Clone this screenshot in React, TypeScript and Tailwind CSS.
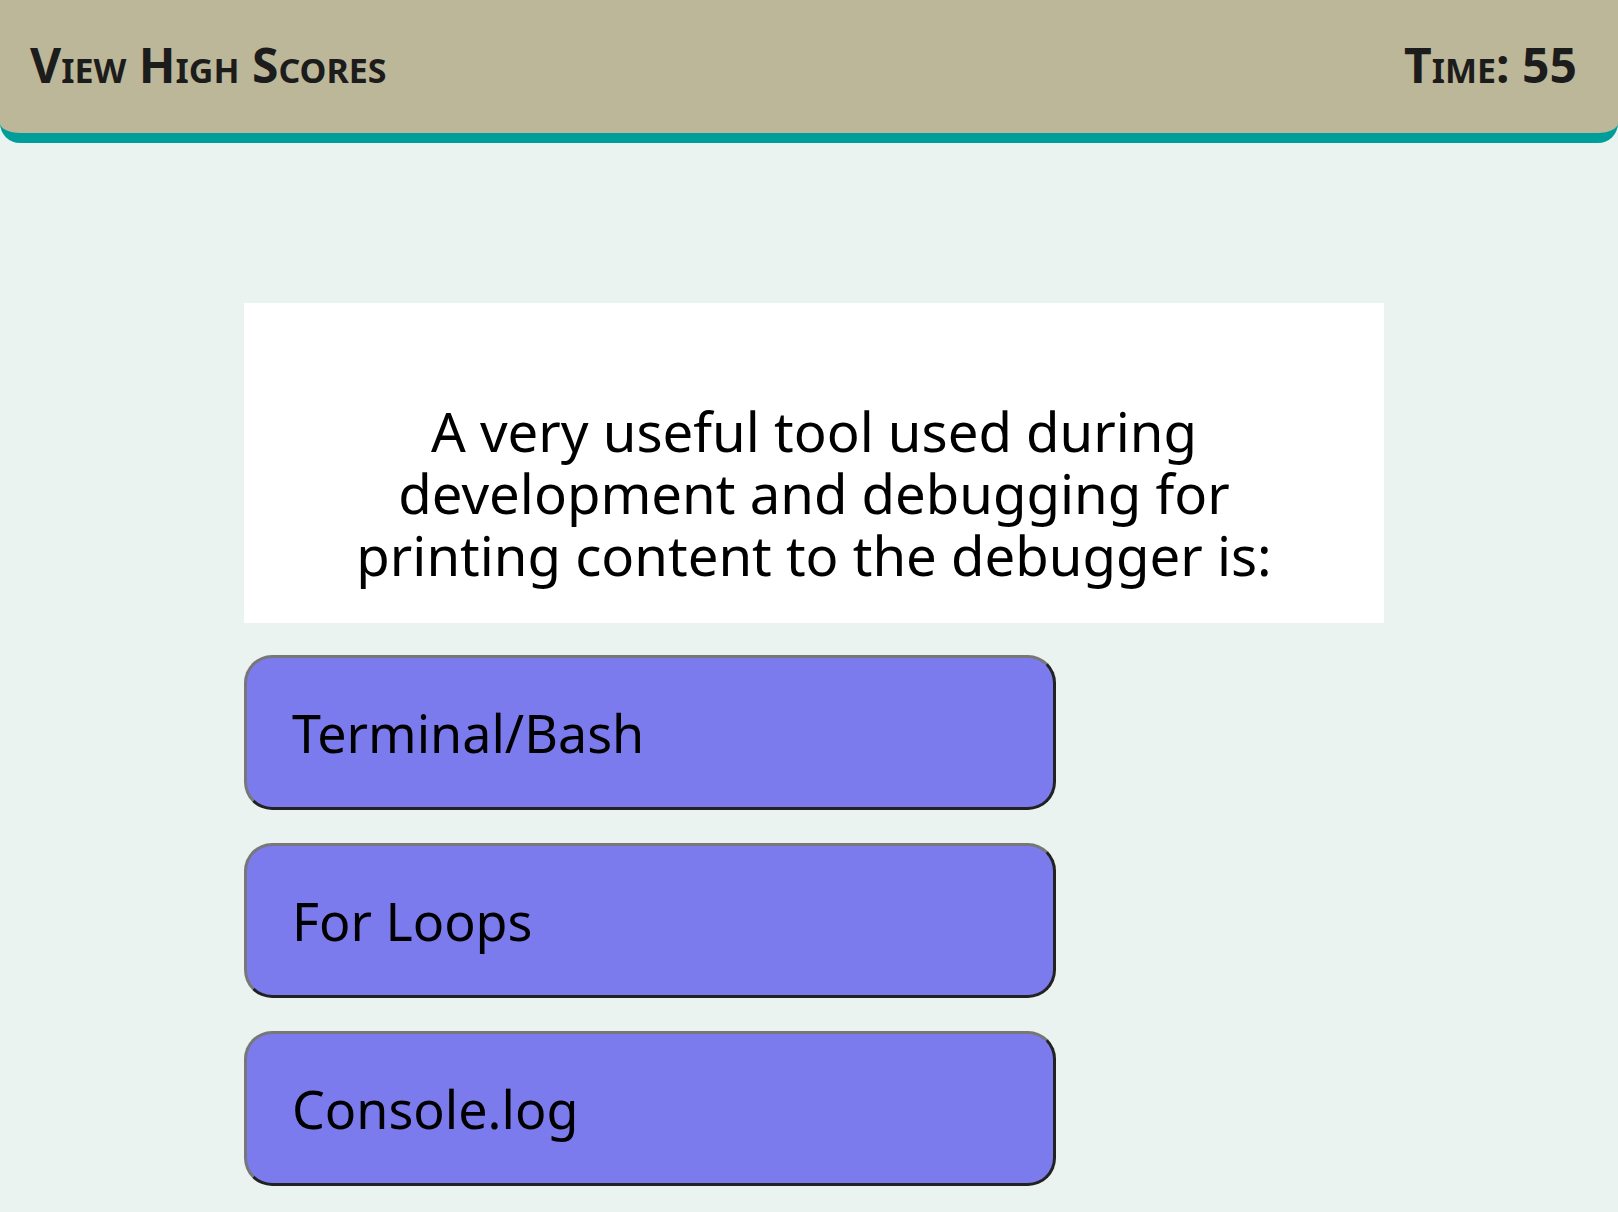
import React from 'react';

const answers = ['Terminal/Bash', 'For Loops', 'Console.log'];

// small caps drawn by hand: first letter full size, the rest upper-cased at 70%
const SmallCaps: React.FC<{ text: string }> = ({ text }) => (
  <>
    {text.split(' ').map((word, i) => (
      <React.Fragment key={i}>
        {i > 0 && ' '}
        <span>{word[0]}</span>
        <span className="text-[34px] uppercase">{word.slice(1)}</span>
      </React.Fragment>
    ))}
  </>
);

const App: React.FC = () => {
  return (
    <div className="min-h-screen bg-[#eaf3f0] font-['Noto_Sans',sans-serif] text-black">
      {/* Header */}
      <header className="flex h-[143px] items-center justify-between rounded-b-[20px] border-b-[10px] border-[#009e9a] bg-[#bcb798] pb-[4px] pl-[30px] pr-[41px] text-[48px] font-bold leading-none text-[#1c1c1c]">
        <a>
          <SmallCaps text="View High Scores" />
        </a>
        <div>
          <span>T</span>
          <span className="text-[34px] uppercase">ime</span>: 55
        </div>
      </header>

      {/* Quiz */}
      <main className="ml-[244px] w-[1140px] pt-[160px]">
        <div className="flex h-[320px] justify-center bg-white pt-[97px]">
          <h2 className="w-[960px] text-center text-[54.5px] font-normal leading-[62px]">
            A very useful tool used during development and debugging for printing content to the debugger is:
          </h2>
        </div>

        <div className="mt-[32px] flex flex-col gap-[33px]">
          {answers.map((a) => (
            <button
              key={a}
              className="flex h-[155px] w-[812px] items-center rounded-[28px] border-[3px] border-b-[#222] border-l-[#777] border-r-[#222] border-t-[#777] bg-[#7b7bee] pl-[45px] text-left text-[52px] leading-none"
            >
              {a}
            </button>
          ))}
        </div>
      </main>
    </div>
  );
};

export default App;
